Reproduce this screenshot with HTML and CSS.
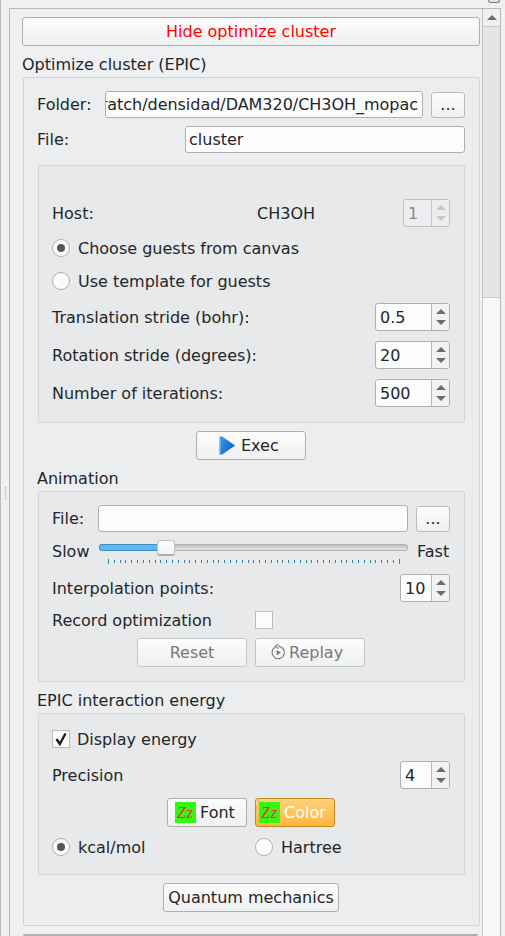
FILE: index.html
```html
<!DOCTYPE html>
<html lang="en">
<head>
    <meta charset="UTF-8">
    <meta name="viewport" content="width=device-width, initial-scale=1.0">
    <title>Optimize cluster</title>
    <link rel="stylesheet" href="styles.css">
</head>
<body>
    <div class="topbar"><div class="corner-icon"></div></div>
    <div class="window">
        <div class="splitter"><div class="splitter-dots"></div></div>
        <div class="frame">
            <div class="content">
                <button class="btn btn-wide btn-red">Hide optimize cluster</button>
                <div class="group-title title-main">Optimize cluster (EPIC)</div>

                <div class="group group-main">
                    <div class="row">
                        <span class="label label-folder">Folder:</span>
                        <div class="input input-folder"><span>ratch/densidad/DAM320/CH3OH_mopac</span></div>
                        <button class="btn btn-dots">...</button>
                    </div>
                    <div class="row row-file">
                        <span class="label label-file">File:</span>
                        <div class="input input-file">cluster</div>
                    </div>

                    <div class="group group-guests">
                        <div class="row row-host">
                            <span class="text label-host">Host:</span>
                            <span class="text">CH3OH</span>
                            <div class="spin spin-small disabled">
                                <span class="spin-value">1</span>
                                <span class="spin-arrows"><i class="arrow-up"></i><i class="arrow-down"></i></span>
                            </div>
                        </div>
                        <div class="row check-row mt12">
                            <span class="radio checked"></span>
                            <span class="text radio-text">Choose guests from canvas</span>
                        </div>
                        <div class="row check-row mt15">
                            <span class="radio"></span>
                            <span class="text radio-text">Use template for guests</span>
                        </div>
                        <div class="row row-between mt13">
                            <span class="text">Translation stride (bohr):</span>
                            <div class="spin spin-large">
                                <span class="spin-value">0.5</span>
                                <span class="spin-arrows"><i class="arrow-up"></i><i class="arrow-down"></i></span>
                            </div>
                        </div>
                        <div class="row row-between mt10">
                            <span class="text">Rotation stride (degrees):</span>
                            <div class="spin spin-large">
                                <span class="spin-value">20</span>
                                <span class="spin-arrows"><i class="arrow-up"></i><i class="arrow-down"></i></span>
                            </div>
                        </div>
                        <div class="row row-between mt10">
                            <span class="text">Number of iterations:</span>
                            <div class="spin spin-large">
                                <span class="spin-value">500</span>
                                <span class="spin-arrows"><i class="arrow-up"></i><i class="arrow-down"></i></span>
                            </div>
                        </div>
                    </div>

                    <div class="center-row mt8">
                        <button class="btn btn-action btn-exec">
                            <svg class="icon-play" width="16" height="19" viewBox="0 0 16 19">
                                <defs>
                                    <linearGradient id="playFill" x1="0" y1="0" x2="1" y2="0.6">
                                        <stop offset="0" stop-color="#3f9bec"/>
                                        <stop offset="1" stop-color="#0c62c8"/>
                                    </linearGradient>
                                </defs>
                                <path d="M1 0.5 L3 0.5 L15.5 9 Q16 9.5 15.5 10 L3 18.5 L1 18.5 Q0 18.5 0 17.5 L0 1.5 Q0 0.5 1 0.5 Z" fill="url(#playFill)"/>
                                <path d="M0 1.5 L0 17.5 L1.5 18.5 L1.5 0.5 Z" fill="#8cc4f2"/>
                            </svg>
                            Exec
                        </button>
                    </div>

                    <div class="group-title">Animation</div>
                    <div class="group group-animation">
                        <div class="row">
                            <span class="label label-anim">File:</span>
                            <div class="input input-anim"></div>
                            <button class="btn btn-dots">...</button>
                        </div>
                        <div class="row row-slider">
                            <span class="label label-slow">Slow</span>
                            <div class="slider">
                                <div class="slider-track"><div class="slider-fill"></div></div>
                                <div class="slider-handle"></div>
                                <div class="slider-ticks">
                                    <i></i><i></i><i></i><i></i><i></i><i></i><i></i><i></i><i></i><i></i><i></i><i></i><i></i><i></i><i></i><i></i><i></i><i></i><i></i><i></i><i></i><i></i><i></i><i></i><i></i><i></i><i></i><i></i><i></i><i></i><i></i><i></i><i></i><i></i><i></i><i></i><i></i><i></i><i></i><i></i><i></i><i></i><i></i><i></i><i></i><i></i><i></i><i></i><i></i><i></i><i></i>
                                </div>
                            </div>
                            <span class="label-fast">Fast</span>
                        </div>
                        <div class="row row-between mt9">
                            <span class="text">Interpolation points:</span>
                            <div class="spin spin-medium">
                                <span class="spin-value">10</span>
                                <span class="spin-arrows"><i class="arrow-up"></i><i class="arrow-down"></i></span>
                            </div>
                        </div>
                        <div class="row check-row mt9">
                            <span class="text label-record">Record optimization</span>
                            <span class="checkbox"></span>
                        </div>
                        <div class="center-buttons mt9">
                            <button class="btn btn-action disabled">Reset</button>
                            <button class="btn btn-action btn-replay disabled">
                                <svg class="icon-replay" width="16" height="17" viewBox="0 0 16 17" fill="none" stroke="#77797b" stroke-width="1.2">
                                    <path d="M5 3.2 A6.2 6.2 0 1 0 8 2.3"/>
                                    <path d="M8.2 0 L5.2 2.4 L8.4 4.6" stroke-width="1.1"/>
                                    <path d="M6.6 6 L11 8.6 L6.6 11.2 Z" fill="#77797b" stroke="none"/>
                                </svg>
                                Replay
                            </button>
                        </div>
                    </div>

                    <div class="group-title">EPIC interaction energy</div>
                    <div class="group group-energy">
                        <div class="row check-row">
                            <span class="checkbox">
                                <svg width="16" height="16" viewBox="0 0 16 16" fill="none" stroke="#1c1e20" stroke-width="2.4">
                                    <path d="M3.5 8 L6.8 13 L12.5 2.5"/>
                                </svg>
                            </span>
                            <span class="text check-text">Display energy</span>
                        </div>
                        <div class="row row-between mt13">
                            <span class="text">Precision</span>
                            <div class="spin spin-medium">
                                <span class="spin-value">4</span>
                                <span class="spin-arrows"><i class="arrow-up"></i><i class="arrow-down"></i></span>
                            </div>
                        </div>
                        <div class="center-buttons mt9">
                            <button class="btn btn-swatch btn-font"><span class="swatch">Zz</span>Font</button>
                            <button class="btn btn-swatch btn-color"><span class="swatch">Zz</span>Color</button>
                        </div>
                        <div class="row check-row mt11">
                            <div class="unit-kcal">
                                <span class="radio checked"></span>
                                <span class="text radio-text">kcal/mol</span>
                            </div>
                            <span class="radio"></span>
                            <span class="text radio-text">Hartree</span>
                        </div>
                    </div>

                    <div class="center-row mt8">
                        <button class="btn btn-quantum">Quantum mechanics</button>
                    </div>
                </div>
                <div class="next-group"></div>
            </div>

            <div class="scrollbar">
                <div class="scroll-button"><i class="arrow-up"></i></div>
                <div class="scroll-page"></div>
                <div class="scroll-rest"></div>
            </div>
        </div>
    </div>
</body>
</html>
```

FILE: styles.css
```css
/* Qt Breeze look */
html, body {
    margin: 0;
    height: 936px;
    overflow: hidden;
}
body {
    background-color: #eff0f1;
    color: #232629;
    font-family: "DejaVu Sans", sans-serif;
    font-size: 16px;
    line-height: 18px;
    border-left: 1px solid #b8b9bb;
    box-sizing: border-box;
}
.topbar {
    height: 8px;
    display: flex;
    justify-content: flex-end;
    padding-right: 5px;
}
.corner-icon {
    width: 10px;
    height: 2px;
    border: 1px solid #77797b;
    border-top: none;
    border-radius: 0 0 3px 3px;
    background-color: #e4e5e6;
}
.window {
    display: flex;
    height: 928px;
}
.splitter {
    width: 8px;
    padding-top: 479px;
    padding-left: 4px;
    box-sizing: border-box;
}
.splitter-dots {
    width: 1px;
    height: 13px;
    background-image: repeating-linear-gradient(#a9aaac 0 1px, transparent 1px 2px);
}
.frame {
    width: 492px;
    display: flex;
    border: 1px solid #b8b9bb;
    border-bottom: none;
    box-sizing: border-box;
}
.content {
    width: 472px;
    padding: 8px 2px 0 12px;
    box-sizing: border-box;
    overflow: hidden;
}

/* scrollbar */
.scrollbar {
    width: 18px;
    display: flex;
    flex-direction: column;
    border-left: 1px solid #c3c4c6;
    box-sizing: border-box;
}
.scroll-button {
    height: 18px;
    display: flex;
    justify-content: center;
    padding-top: 6px;
    box-sizing: border-box;
    border-bottom: 1px solid #c9cacc;
}
.scroll-page {
    height: 270px;
    background-color: #e3e5e6;
    border-bottom: 1px solid #c9cacc;
}
.scroll-rest {
    flex: 1;
    background-color: #f8f8f8;
}

/* buttons */
.btn {
    height: 29px;
    padding: 0;
    display: flex;
    align-items: center;
    justify-content: center;
    box-sizing: border-box;
    background: linear-gradient(#fcfcfc, #eff0f1);
    border: 1px solid #aeafb1;
    border-radius: 3px;
    color: #232629;
    font-family: inherit;
    font-size: inherit;
}
.btn.disabled {
    color: #77797b;
    border-color: #c4c5c7;
}
.btn-wide {
    width: 458px;
}
.btn-red {
    color: #ff0000;
}
.btn-dots {
    width: 34px;
    height: 26px;
    flex: none;
    border-color: #bbbcbe;
}
.btn-action {
    width: 110px;
}
.btn-exec {
    justify-content: flex-start;
    padding-left: 22px;
    gap: 6px;
}
.btn-replay {
    justify-content: flex-start;
    padding-left: 14px;
    gap: 3px;
}
.btn-quantum {
    width: 176px;
}
.btn-swatch {
    justify-content: flex-start;
    gap: 4px;
}
.btn-font {
    width: 80px;
    padding-left: 7px;
}
.btn-color {
    width: 80px;
    padding-left: 3px;
    color: #ffffff;
    background: linear-gradient(#ffd27a, #fdb63d);
    border-color: #c28a1c;
}
.swatch {
    width: 21px;
    height: 21px;
    background-color: #33f912;
    color: #e8303a;
    font-family: "Liberation Serif", serif;
    font-style: italic;
    font-size: 16px;
    letter-spacing: 1px;
    line-height: 21px;
    text-align: center;
}

/* group boxes */
.group-title {
    margin: 9px 0 4px -1px;
    height: 18px;
    line-height: 20px;
}
.title-main {
    margin-left: 0;
}
.group {
    border: 1px solid #d3d4d6;
    border-radius: 2px;
    box-sizing: border-box;
}
.group-main {
    margin-left: 1px;
    background-color: #ecedee;
    padding: 13px 14px 13px 14px;
}
.group-main > .row:first-child,
.row-file {
    margin-left: -1px;
}
.group-guests {
    margin-top: 12px;
    height: 258px;
    padding: 33px 14px 0 13px;
    background-color: #e8e9eb;
}
.group-animation {
    height: 191px;
    padding: 13px 14px 0 13px;
    background-color: #e8e9eb;
}
.group-energy {
    height: 162px;
    padding: 16px 14px 0 13px;
    background-color: #e8e9eb;
}
.next-group {
    margin: 8px 0 0 1px;
    width: 455px;
    border-top: 2px solid #b0b1b3;
    border-radius: 2px;
}

/* rows */
.row {
    display: flex;
    align-items: center;
}
.row-between {
    justify-content: space-between;
}
.row-file {
    margin-top: 8px;
}
.row-slider {
    margin-top: 8px;
    height: 25px;
    align-items: flex-start;
}
.check-row {
    height: 18px;
}
.center-row {
    display: flex;
    justify-content: center;
    padding-right: 1px;
}
.center-buttons {
    display: flex;
    justify-content: center;
    gap: 8px;
}
.mt8 { margin-top: 8px; }
.mt9 { margin-top: 9px; }
.mt10 { margin-top: 10px; }
.mt11 { margin-top: 11px; }
.mt12 { margin-top: 12px; }
.mt13 { margin-top: 13px; }
.mt15 { margin-top: 15px; }

/* labels */
.text { padding-top: 2px; }
.label-folder { width: 68px; }
.label-file { width: 148px; }
.label-anim { width: 46px; }
.label-host { width: 205px; }
.label-slow {
    width: 47px;
    margin-top: 3px;
}
.label-fast {
    margin: 3px 0 0 9px;
}
.label-record { width: 203px; }
.row-host .spin {
    margin-left: auto;
}
.radio-text { margin-left: 8px; }
.check-text { margin-left: 7px; }
.unit-kcal {
    width: 203px;
    display: flex;
    align-items: center;
}

/* inputs */
.input {
    height: 27px;
    display: flex;
    align-items: center;
    box-sizing: border-box;
    background-color: #fcfcfc;
    border: 1px solid #aeafb1;
    border-radius: 3px;
    white-space: nowrap;
    overflow: hidden;
}
.input-folder {
    width: 318px;
    margin-right: 8px;
    justify-content: flex-end;
    padding-right: 4px;
    letter-spacing: -0.03px;
}
.input-file {
    width: 280px;
    padding-left: 3px;
}
.input-anim {
    width: 310px;
    margin-right: 8px;
}

/* spin boxes */
.spin {
    height: 28px;
    display: flex;
    box-sizing: border-box;
    background-color: #fcfcfc;
    border: 1px solid #aeafb1;
    border-radius: 3px;
}
.spin-small { width: 47px; }
.spin-medium { width: 50px; }
.spin-large { width: 75px; }
.spin-value {
    flex: 1;
    padding: 1px 0 0 4px;
    line-height: 26px;
}
.spin-arrows {
    width: 18px;
    padding-top: 5px;
    display: flex;
    flex-direction: column;
    align-items: center;
    gap: 6px;
    box-sizing: border-box;
    border-left: 1px solid #b8b9bb;
    background-color: #f1f2f3;
    border-radius: 0 2px 2px 0;
}
.arrow-up, .arrow-down {
    display: block;
    width: 0;
    height: 0;
    border-left: 5px solid transparent;
    border-right: 5px solid transparent;
}
.arrow-up { border-bottom: 5px solid #6b6d6f; }
.arrow-down { border-top: 5px solid #6b6d6f; }
.spin.disabled {
    background-color: #ecedee;
    border-color: #c0c1c3;
    color: #8a8c8e;
}
.spin.disabled .spin-arrows {
    background-color: #ecedee;
    border-left-color: #c8c9cb;
}
.spin.disabled .arrow-up { border-bottom-color: #c6c7c9; }
.spin.disabled .arrow-down { border-top-color: #c6c7c9; }

/* radio and check */
.radio {
    width: 18px;
    height: 18px;
    flex: none;
    display: flex;
    align-items: center;
    justify-content: center;
    box-sizing: border-box;
    background-color: #fcfcfc;
    border: 1px solid #aeafb1;
    border-radius: 50%;
}
.radio.checked::after {
    content: "";
    width: 8px;
    height: 8px;
    background-color: #555759;
    border-radius: 50%;
}
.checkbox {
    width: 18px;
    height: 18px;
    flex: none;
    display: flex;
    align-items: center;
    justify-content: center;
    box-sizing: border-box;
    background-color: #fcfcfc;
    border: 1px solid #bbbcbe;
}

/* slider */
.slider {
    width: 309px;
    position: relative;
    padding-top: 4px;
}
.slider-track {
    height: 7px;
    box-sizing: border-box;
    background: linear-gradient(#bfc0c2, #e4e5e6);
    border: 1px solid #b3b4b6;
    border-radius: 3px;
}
.slider-fill {
    width: 58px;
    height: 100%;
    background-color: #5cb8f0;
    box-shadow: 0 0 0 1px #3f8fc4;
    border-radius: 2px 0 0 2px;
}
.slider-handle {
    position: absolute;
    left: 58px;
    top: 0;
    width: 18px;
    height: 16px;
    box-sizing: border-box;
    background: linear-gradient(#ffffff, #f2f3f4);
    border: 1px solid #c0c1c3;
    border-bottom: 2px solid #aeafb1;
    border-radius: 3px;
}
.slider-ticks {
    margin: 8px 8px 0 9px;
    height: 5px;
    display: flex;
    justify-content: space-between;
    align-items: center;
}
.slider-ticks i {
    width: 1px;
    height: 3px;
    background-color: #2f85ad;
}
.slider-ticks i:first-child,
.slider-ticks i:last-child {
    height: 5px;
}
```
